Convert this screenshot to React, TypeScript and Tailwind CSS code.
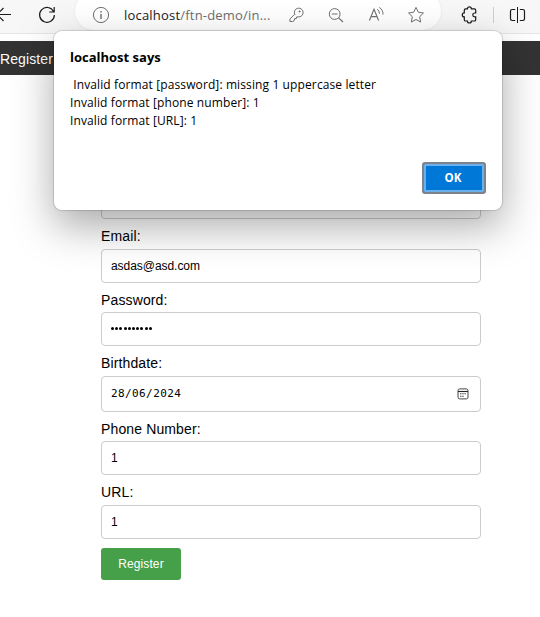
import React from "react";

const ui = "font-['Open_Sans','Noto_Sans',sans-serif]";

function Toolbar() {
  return (
    <header className="relative h-[34px] w-full shrink-0 border-b border-[#e6e6e6] bg-[#f7f7f7]">
      <div className="flex h-[30px] items-center">
        <svg className="h-[30px] w-[75px] shrink-0" viewBox="0 0 75 30" fill="none" stroke="#1b1b1b" strokeWidth="1.2">
          <path d="M-3 14.5H11M3.5 8L-3 14.5L3.5 21" />
          <path d="M53.6 11.5A7.4 7.4 0 1 0 54.4 15M54.2 7V12H49.2" />
        </svg>
        <div className="flex h-[38px] w-[366px] shrink-0 -translate-y-1 items-center rounded-full bg-white pt-2 shadow-[0_0_3px_rgba(0,0,0,0.08)]">
          <svg className="ml-[17px] h-[18px] w-[18px] shrink-0" viewBox="0 0 18 18" fill="none" stroke="#707070" strokeWidth="1">
            <circle cx="9" cy="9" r="7.6" />
            <path d="M9 8V13M9 5V6.5" strokeWidth="1.4" />
          </svg>
          <span className={`${ui} ml-[14px] w-[164px] whitespace-nowrap text-[13px] leading-[18px] tracking-[0.2px] text-[#6e6e6e]`}>
            <span className="text-[#1b1b1b]">localhost</span>/ftn-demo/in...
          </span>
          <svg className="h-[18px] w-[150px] shrink-0" viewBox="288 6 150 18" fill="none" stroke="#707070" strokeWidth="1">
            <path d="M295.2 15.2A4.4 4.4 0 1 1 298.3 17.1L296.8 17.1L296.5 18.7L294.7 18.8L294.5 20.6L292.8 21.7H290V19.2L294.4 14.8" transform="translate(-.1 -.2)" />
            <circle cx="299.6" cy="11.5" r=".6" fill="#707070" />
            <circle cx="334.7" cy="14" r="5.4" />
            <path d="M331.8 14H337.6M338.6 17.9L343 22" strokeWidth="1.2" />
            <path d="M369.4 20.5L374 9.3L378.6 20.5M371 16.6H377" strokeWidth="1.1" />
            <path d="M377.2 9.2Q379.4 10.6 379.5 13.7M379.4 7.5Q383.2 9.8 383 14.6" />
            <path d="M416 7.4L418.3 12.2L423.5 13L419.7 16.7L420.6 22L416 19.5L411.4 22L412.3 16.7L408.5 13L413.7 12.2Z" strokeLinejoin="round" />
          </svg>
        </div>
        <svg className="h-[30px] w-[99px] shrink-0" viewBox="441 0 99 30" fill="none" stroke="#1b1b1b" strokeWidth="1.2">
          <path d="M465.6 8.9H467.4A2 2 0 0 1 471.4 8.9H474.4Q475.7 8.9 475.7 10.2V13H474.7A1.9 1.9 0 0 0 474.7 16.8H475.7V19.7Q475.7 21 474.4 21H471.4A2 2 0 0 1 467.4 21H465.6Q464.3 21 464.3 19.7V16.9A2 2 0 0 1 464.3 12.9V10.2Q464.3 8.9 465.6 8.9Z" />
          <path d="M493.5 7V23" stroke="#cdcdcd" strokeWidth="1" />
          <path d="M517.5 7V23" strokeWidth="1" />
          <path d="M515.2 9.5H512.2Q510.5 9.5 510.5 11.2V18.8Q510.5 20.5 512.2 20.5H515.2M519.8 9.5H522.8Q524.5 9.5 524.5 11.2V18.8Q524.5 20.5 522.8 20.5H519.8" />
        </svg>
      </div>
    </header>
  );
}

const box = "flex w-full items-center rounded-[4px] border border-[#cccccc] bg-white px-[9px] text-[12px] text-black";

function Field({ label, labelClass, boxClass = "h-[34px]", children }: {
  label: string;
  labelClass: string;
  boxClass?: string;
  children: React.ReactNode;
}) {
  return (
    <div className="flex flex-col">
      <label className={`${labelClass} flex items-end whitespace-nowrap text-[14px] leading-[16px] tracking-[0.13px] text-black`}>{label}</label>
      <div className={`${box} ${boxClass}`}>{children}</div>
    </div>
  );
}

function CalendarIcon() {
  return (
    <svg className="mr-[2px] h-3 w-3" viewBox="0 0 12 12" fill="none" stroke="#444">
      <rect x="1" y=".9" width="10" height="10" rx="1.7" strokeWidth="1" />
      <path d="M1 3.5H11" stroke="#222" strokeWidth="1.1" />
      <path d="M3 5.8H9M3 8.2H7" strokeWidth="1.1" strokeDasharray="1.5 .7" />
    </svg>
  );
}

function AlertDialog() {
  return (
    <section
      role="dialog"
      className={`${ui} absolute left-[54px] top-[31px] flex h-[179px] w-[448px] flex-col rounded-[8px] bg-white px-4 pt-4 text-black shadow-[0_0_1px_1px_rgba(0,0,0,0.14),0_16px_42px_rgba(0,0,0,0.34)]`}
    >
      <h1 className="text-[13px] font-bold leading-[20px]">localhost says</h1>
      <p className="mt-[9px] whitespace-pre text-[12px] leading-[18px] tracking-[0.115px]">
        {" Invalid format [password]: missing 1 uppercase letter\nInvalid format [phone number]: 1\nInvalid format [URL]: 1"}
      </p>
      <button className="mt-[32px] flex h-[32px] w-[64px] items-center justify-center self-end rounded-[3px] border-2 border-[#7d838a] bg-[#0078d7] pr-[2px] text-[11.5px] font-bold text-white shadow-[inset_0_0_0_2px_#6bb0ea]">
        OK
      </button>
    </section>
  );
}

export default function App() {
  return (
    <div className="relative flex h-[617px] w-[540px] flex-col overflow-hidden bg-white font-['Liberation_Sans',Arial,sans-serif]">
      <Toolbar />
      <nav className="mt-[7px] flex h-[34px] shrink-0 items-center bg-[#333333] text-[14px] tracking-[0.1px] text-white">
        <span className="pt-[2px]">Register</span>
      </nav>
      <form className="ml-[101px] mt-[110px] flex w-[380px] flex-col">
        <div className={`${box} h-[34px]`} />
        <Field label="Email:" labelClass="h-[30px] pb-[5px]">
          <span className="tracking-[-0.05px]">asdas@asd.com</span>
        </Field>
        <Field label="Password:" labelClass="h-[29px] pb-[4px]">
          <span className="-mt-[2px] flex gap-[1.2px]">
            {Array.from({ length: 10 }, (_, i) => (
              <i key={i} className="h-[3px] w-[3px] rounded-full bg-black" />
            ))}
          </span>
        </Field>
        <Field label="Birthdate:" labelClass="h-[30px] pb-[5px]" boxClass="h-[36px] justify-between">
          <span className="pt-px font-['DejaVu_Sans_Mono',monospace] text-[11px] tracking-[0.4px]">28/06/2024</span>
          <CalendarIcon />
        </Field>
        <Field label="Phone Number:" labelClass="h-[29px] pb-[4px]">1</Field>
        <Field label="URL:" labelClass="h-[30px] pb-[5px]">1</Field>
        <button type="button" className="mt-[9px] h-[32px] w-[80px] rounded-[3px] bg-[#46a049] text-[12px] tracking-[0.1px] text-white">
          Register
        </button>
      </form>
      <AlertDialog />
    </div>
  );
}
